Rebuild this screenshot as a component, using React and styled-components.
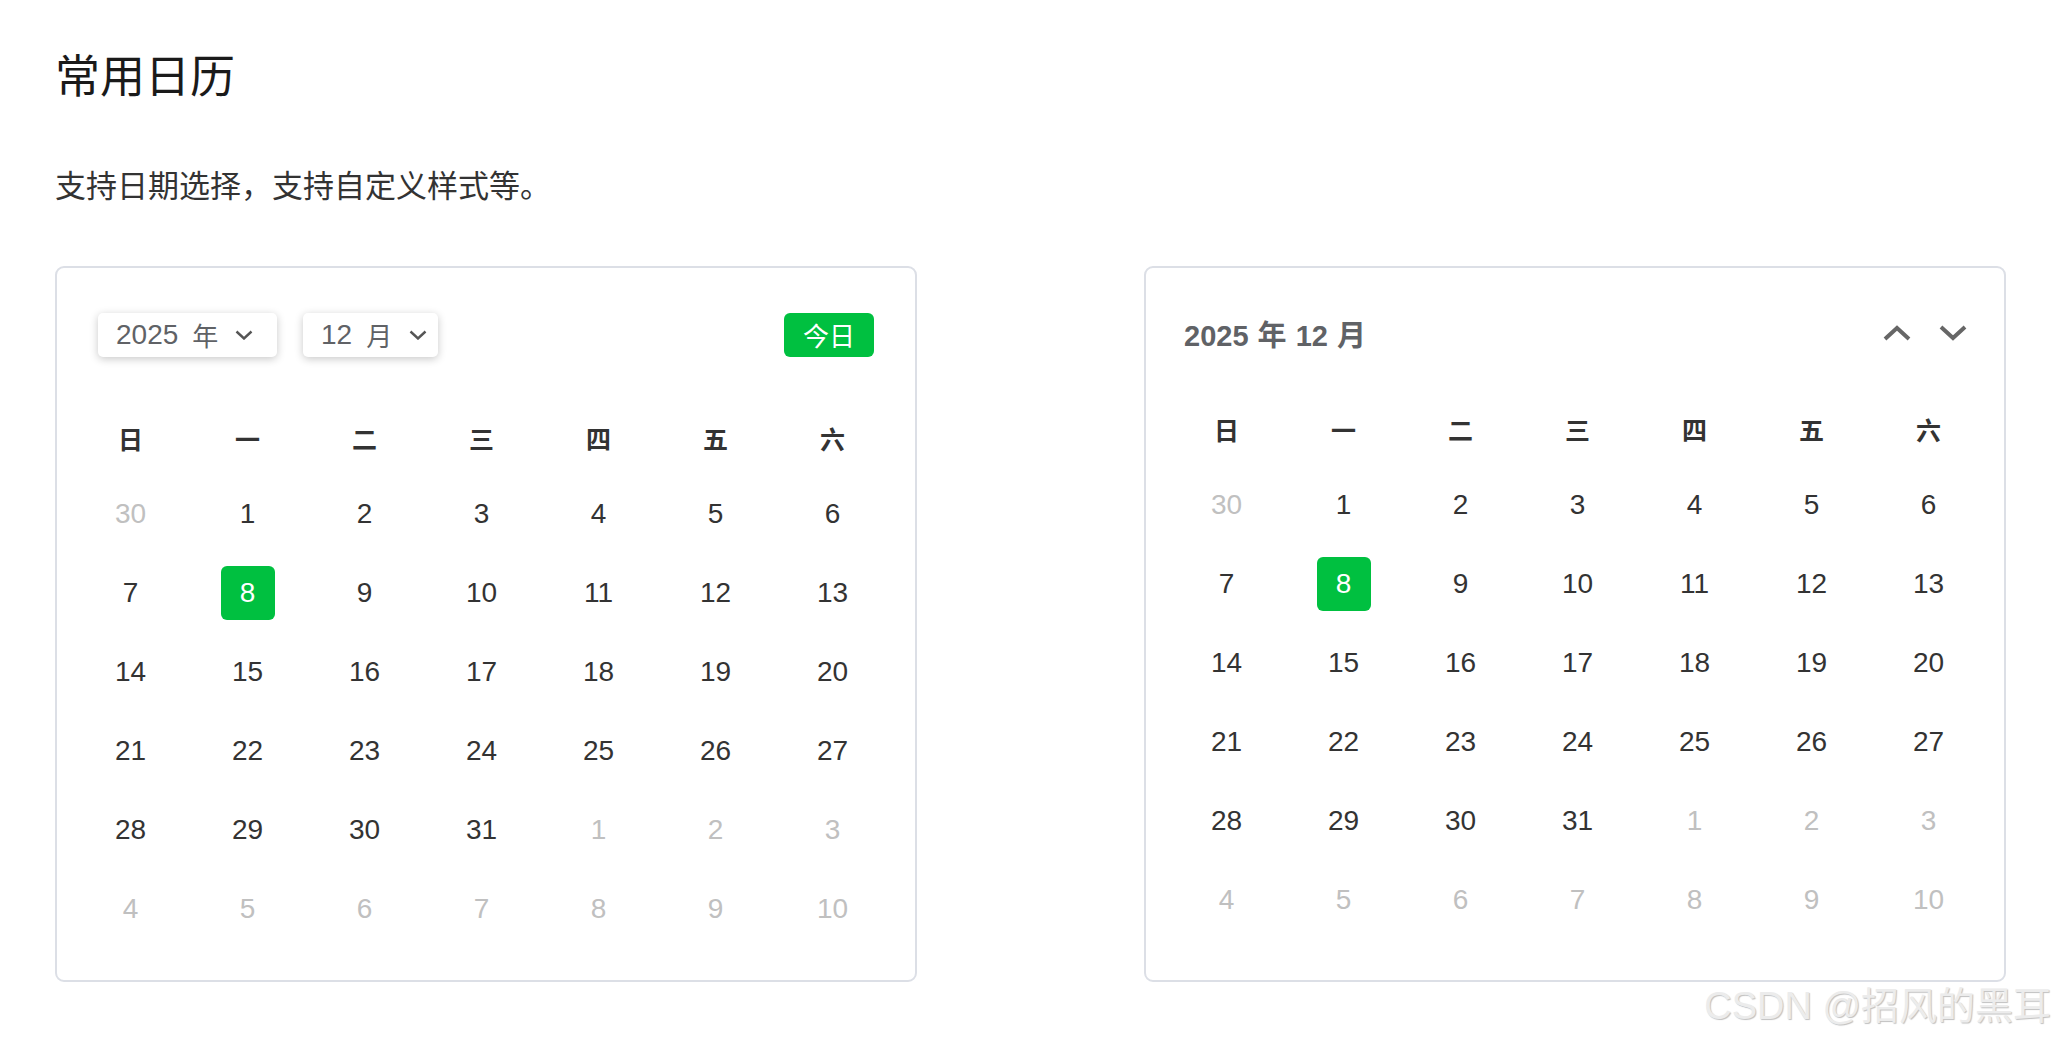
import React from 'react'
import styled, { createGlobalStyle } from 'styled-components'

const GlobalStyle = createGlobalStyle`
  html, body {
    margin: 0;
    padding: 0;
    background: #fff;
  }
  body {
    font-family: 'Liberation Sans', 'Noto Sans CJK SC', sans-serif;
    color: #333;
  }
`

const GREEN = '#00c040'
const WEEK = ['日', '一', '二', '三', '四', '五', '六']

// december 2025, week starts on sunday
const buildDays = () => {
  const days = [{ n: 30, other: true }]
  for (let i = 1; i <= 31; i++) days.push({ n: i, other: false })
  let next = 1
  while (days.length < 42) days.push({ n: next++, other: true })
  return days
}

const Page = styled.div`
  position: relative;
  min-height: 1040px;
  padding: 51px 52px 0 55px;
  box-sizing: border-box;
`

const Title = styled.h1`
  margin: 0;
  font-size: 45px;
  line-height: 54px;
  font-weight: 400;
  color: #1a1a1a;
`

const Desc = styled.p`
  margin: 63px 0 0;
  font-size: 31px;
  line-height: 37px;
  color: #333;
`

const Cards = styled.div`
  display: grid;
  grid-template-columns: 862px 862px;
  column-gap: 227px;
  margin-top: 61px;
`

const Card = styled.div`
  box-sizing: border-box;
  height: 716px;
  border: 2px solid #dcdfe6;
  border-radius: 9px;
  padding: ${p => p.$compact ? '45px 17px 0 22px' : '44px 24px 0 15px'};
`

const Header = styled.div`
  box-sizing: border-box;
  display: flex;
  align-items: center;
  justify-content: space-between;
  height: 45px;
  padding-bottom: ${p => p.$compact ? '5px' : '0'};
  margin: ${p => p.$compact ? '0 20px 41px 16px' : '0 17px 51px 26px'};
`

const Selects = styled.div`
  display: flex;
  gap: 26px;
`

const Select = styled.div`
  box-sizing: border-box;
  width: ${p => p.$width}px;
  height: 44px;
  display: flex;
  align-items: center;
  padding-left: 18px;
  background: #fff;
  border-radius: 5px;
  box-shadow: 0 2px 9px rgba(0, 0, 0, 0.22);
  color: #606266;
`

const SelectNum = styled.span`
  font-size: 28px;
`

const SelectUnit = styled.span`
  font-size: 26px;
  margin-left: 14px;
`

const SelectArrow = styled.svg`
  margin-left: 17px;
  flex: none;
`

const TodayButton = styled.button`
  width: 90px;
  height: 44px;
  border: none;
  border-radius: 6px;
  background: ${GREEN};
  color: #fff;
  font-family: inherit;
  font-size: 26px;
  padding: 0;
  cursor: pointer;
`

const MonthTitle = styled.div`
  font-size: 29px;
  font-weight: 700;
  color: #606266;
  word-spacing: 1px;
`

const Arrows = styled.div`
  display: flex;
  align-items: center;
  gap: 28px;
`

const Grid = styled.div`
  display: grid;
  grid-template-columns: repeat(7, 117px);
  grid-template-rows: 66px repeat(6, 79px);
`

const WeekCell = styled.div`
  display: flex;
  align-items: center;
  justify-content: center;
  padding-bottom: 6px;
  font-size: 25px;
  font-weight: 700;
  color: #333;
`

const DayCell = styled.div`
  display: flex;
  align-items: center;
  justify-content: center;
`

const Day = styled.span`
  width: 54px;
  height: 54px;
  display: flex;
  align-items: center;
  justify-content: center;
  border-radius: 6px;
  font-size: 28px;
  color: ${p => p.$active ? '#fff' : p.$other ? '#c0c0c0' : '#333'};
  background: ${p => p.$active ? GREEN : 'transparent'};
`

const Watermark = styled.div`
  position: absolute;
  right: 7px;
  top: 983px;
  font-size: 38px;
  line-height: 46px;
  color: #ececec;
  text-shadow: 1px 1px 1px rgba(0, 0, 0, 0.25);
  white-space: nowrap;
`

const ChevronDown = () => (
  <SelectArrow width="18" height="10" viewBox="0 0 18 10">
    <polyline points="1.5,1.5 9,8.5 16.5,1.5" fill="none" stroke="#555" strokeWidth="2.4" />
  </SelectArrow>
)

const Caret = ({ up }) => (
  <svg width="28" height="16" viewBox="0 0 28 16">
    <polyline
      points={up ? '2,14 14,3 26,14' : '2,2 14,13 26,2'}
      fill="none"
      stroke="#666"
      strokeWidth="4"
    />
  </svg>
)

const DaysGrid = () => {
  const days = buildDays()
  return (
    <Grid>
      {WEEK.map(w => <WeekCell key={w}>{w}</WeekCell>)}
      {days.map((d, i) => (
        <DayCell key={i}>
          <Day $other={d.other} $active={!d.other && d.n === 8}>{d.n}</Day>
        </DayCell>
      ))}
    </Grid>
  )
}

const App = () => {
  return (
    <Page>
      <GlobalStyle />
      <Title>常用日历</Title>
      <Desc>支持日期选择，支持自定义样式等。</Desc>
      <Cards>
        <Card>
          <Header>
            <Selects>
              <Select $width={179}>
                <SelectNum>2025</SelectNum>
                <SelectUnit>年</SelectUnit>
                <ChevronDown />
              </Select>
              <Select $width={135}>
                <SelectNum>12</SelectNum>
                <SelectUnit>月</SelectUnit>
                <ChevronDown />
              </Select>
            </Selects>
            <TodayButton>今日</TodayButton>
          </Header>
          <DaysGrid />
        </Card>
        <Card $compact>
          <Header $compact>
            <MonthTitle>2025 年 12 月</MonthTitle>
            <Arrows>
              <Caret up />
              <Caret />
            </Arrows>
          </Header>
          <DaysGrid />
        </Card>
      </Cards>
      <Watermark>CSDN @招风的黑耳</Watermark>
    </Page>
  )
}

export default App
